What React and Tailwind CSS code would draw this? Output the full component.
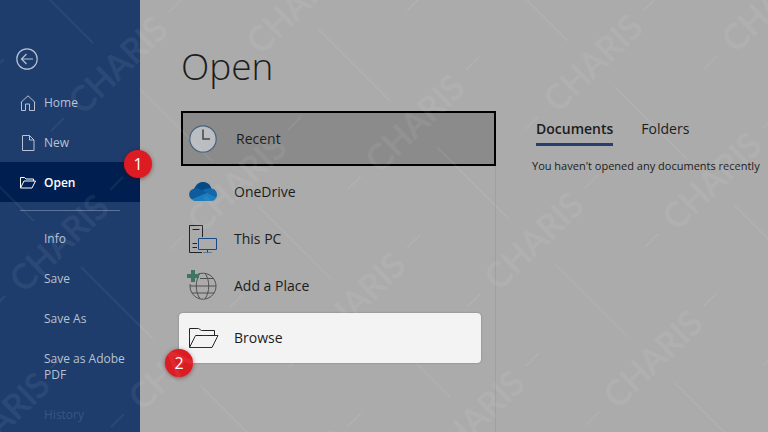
import React from "react";

/* ── Repeating watermark: lattice of rotated words and diagonal rules ── */
const MARKS = [];
for (let n = -12; n <= 16; n++) {
  for (let m = -12; m <= 16; m++) {
    const x = 118 + 178 * n - 59 * m;
    const y = 65 - 60 * n + 178 * m;
    if (x > -95 && x < window.innerWidth + 65 && y > -95 && y < window.innerHeight + 65) {
      MARKS.push({ x, y });
    }
  }
}

function Watermark() {
  return (
    <svg className="pointer-events-none absolute inset-0 z-30 h-full w-full" aria-hidden="true">
      {MARKS.map(({ x, y }) => (
        <g key={`${x},${y}`} transform={`translate(${x} ${y})`} stroke="#fff" opacity="0.06">
          <text
            transform="rotate(-44)"
            textAnchor="middle"
            y="12"
            fill="#fff"
            className="text-[34px]"
            fontFamily="Lato, sans-serif"
          >
            CHARIS
          </text>
          <path d="M-67 66l13-13M51-53l13-13M22 24l72 72" fill="none" strokeWidth="2" />
        </g>
      ))}
    </svg>
  );
}

/* ── Icons ── */
const BackIcon = () => (
  <svg width="22" height="22" viewBox="0 0 22 22" fill="none" stroke="currentColor" strokeWidth="1.2">
    <circle cx="11" cy="11" r="10.2" />
    <path d="M17 11H5.5M10.5 6l-5 5 5 5" />
  </svg>
);

const HomeIcon = () => (
  <svg width="16" height="16" viewBox="0 0 16 16" fill="none" stroke="currentColor">
    <path d="M.8 7.5L8 .8l7.2 6.7M1.5 7v8.5h4V9h4v6.5h5V7" />
  </svg>
);

const NewIcon = () => (
  <svg width="16" height="16" viewBox="0 0 16 16" fill="none" stroke="currentColor">
    <path d="M2.5.5h7L14 5v10.500H2.500zM9.500.5V5H14" />
  </svg>
);

const OpenIcon = () => (
  <svg width="16" height="16" viewBox="0 0 16 16" fill="none" stroke="currentColor">
    <path d="M.5 13V2.500h4L6 4h7.500v2M.5 13L4 6h11.500L12 13z" />
  </svg>
);

const ClockIcon = () => (
  <svg width="28" height="28" viewBox="0 0 28 28" fill="none">
    <circle cx="14" cy="14" r="13.2" fill="#babdc1" stroke="#48617c" strokeWidth="1.2" />
    <path d="M14 4.500V14h7" stroke="#444" strokeWidth="1.5" />
  </svg>
);

const CloudIcon = () => (
  <svg width="28" height="28" viewBox="0 0 28 28">
    <path d="M5 11C7 6.500 10 4 14 4c4 0 7.500 2.500 8.500 7L15 17z" fill="#074a86" />
    <path d="M22 10.500c3.500 0 6 3 6 6 0 1.500-.3 2.500-1 3.500L13 13c2.500-2.500 5.500-3 9-2.500z" fill="#1268a8" />
    <path d="M6 10.500c3-.5 5 .3 7 1.500l5 3.500-15 6C-2 18 0 11 6 10.500z" fill="#0c5c9e" />
    <path d="M3 21.500L15 16l3-1 9 5c-1 2-2.500 3-5 3H7c-2 0-3-.5-4-1.500z" fill="#1a7dbd" />
  </svg>
);

const PcIcon = () => (
  <svg width="28" height="28" viewBox="0 0 28 28" fill="none">
    <path d="M13.500 12V.5H.5v27H13M3.500 4.500h7M3.500 18.500H8M3.500 22.500H8" stroke="#222" />
    <path d="M9.500 13.500h18v11h-18zM18.500 24.500v3M14 28h9" stroke="#174a83" />
  </svg>
);

const GlobeIcon = () => (
  <svg className="overflow-visible" width="28" height="28" viewBox="0 0 28 28" fill="none">
    <g stroke="#505050">
      <path d="M9 2.200A13 13 0 1 1 1.200 12" />
      <path d="M11 1.200C6 8 6 20 11 26.700M16 1.200c5 6.800 5 18.800 0 25.500M11 6.500h13.500M1 14h26M3 21h22" />
    </g>
    <path d="M4-2v12M-2 4h12" stroke="#3f7562" strokeWidth="4" />
  </svg>
);

const FolderIcon = () => (
  <svg className="overflow-visible" width="28" height="28" viewBox="0 0 28 28" fill="none" stroke="#222">
    <path d="M.5 23.500v-19h9l3 2h13v5M.5 23.500l6-12H29l-6 12z" />
  </svg>
);

function Badge({ children, className }) {
  return (
    <span
      className={`absolute z-20 flex size-7 items-center justify-center rounded-full bg-[#dc1c22] text-base text-white shadow-[0_1px_4px_rgba(90,0,0,0.5)] ${className}`}
    >
      {children}
    </span>
  );
}

const MAIN_NAV = [
  { label: "Home", Icon: HomeIcon },
  { label: "New", Icon: NewIcon },
  { label: "Open", Icon: OpenIcon, active: true },
];

const FILE_NAV = ["Info", "Save", "Save As", "Save as Adobe PDF"];

const PLACES = [
  { label: "OneDrive", Icon: CloudIcon },
  { label: "This PC", Icon: PcIcon },
  { label: "Add a Place", Icon: GlobeIcon },
];

export default function App() {
  return (
    <div className="relative flex h-screen overflow-hidden bg-[#ababab] font-['Open_Sans',sans-serif] text-[#1c1c1c]">

      {/* ── Sidebar ── */}
      <nav className="z-10 flex w-35 shrink-0 flex-col bg-[#1e3c6c] pt-12 text-xs text-[#b8c2d2]">
        <button aria-label="Back" className="mb-3 ml-4 self-start">
          <BackIcon />
        </button>
        {MAIN_NAV.map(({ label, Icon, active }) => (
          <button
            key={label}
            className={`relative flex h-10 shrink-0 items-center gap-2 pt-0.5 pl-5 text-left ${active ? "bg-[#001f50] font-semibold text-white" : ""}`}
          >
            <Icon />
            {label}
            {active && <Badge className="-top-3 -right-3 font-normal">1</Badge>}
          </button>
        ))}
        <hr className="mx-5 my-2 border-[#5b7299]" />
        {FILE_NAV.map((label) => (
          <button key={label} className="shrink-0 py-3 pr-2 pl-11 text-left leading-4">
            {label}
          </button>
        ))}
        <button disabled className="shrink-0 py-3 pl-11 text-left leading-4 text-[#3b5580]">
          History
        </button>
      </nav>

      {/* ── Places ── */}
      <main className="flex min-w-0 flex-1">
        <section className="flex w-[356px] shrink-0 flex-col pl-[41px]">
          <h1 className="pt-10 pb-5 text-[37px] leading-[51px] font-light">Open</h1>
          <button className="flex h-[55px] shrink-0 items-center gap-[19px] border-2 border-black bg-[#8b8b8b] pl-1.5 text-left text-sm">
            <ClockIcon />
            Recent
          </button>
          <div className="flex flex-1 flex-col border-r border-[#a0a0a0] pt-0.5">
            {PLACES.map(({ label, Icon }) => (
              <button key={label} className="flex h-[47px] shrink-0 items-center gap-[17px] pl-2 text-left text-sm">
                <Icon />
                {label}
              </button>
            ))}
            <button className="relative mt-1 mr-3.5 -ml-0.5 flex h-[50px] shrink-0 items-center gap-[17px] rounded-sm bg-[#f3f3f3] pl-2.5 text-left text-sm shadow-[0_0_2px_rgba(0,0,0,0.3)]">
              <FolderIcon />
              Browse
              <Badge className="-bottom-3.5 -left-3.5">2</Badge>
            </button>
          </div>
        </section>

        {/* ── Recent documents ── */}
        <section className="min-w-0 flex-1 pt-[119px] pl-9">
          <div role="tablist" className="flex gap-7 pl-1 text-sm">
            <button role="tab" aria-selected="true" className="border-b-3 border-[#263f6e] pb-1 font-semibold">
              Documents
            </button>
            <button role="tab" aria-selected="false" className="border-b-3 border-transparent pb-1">
              Folders
            </button>
          </div>
          <p className="pt-3 text-[11px] leading-4 whitespace-nowrap">You haven't opened any documents recently</p>
        </section>
      </main>

      <Watermark />
    </div>
  );
}
